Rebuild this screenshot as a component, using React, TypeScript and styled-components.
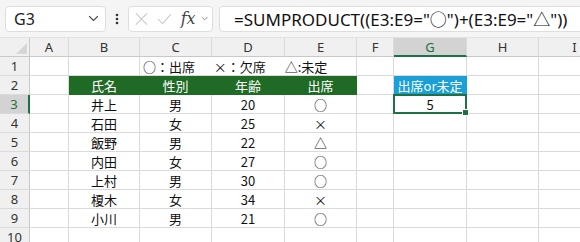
import React from 'react'
import styled, { createGlobalStyle } from 'styled-components'

const GlobalStyle = createGlobalStyle`
  html, body { margin: 0; padding: 0; background: #fff; }
  body { width: 580px; height: 242px; overflow: hidden; }
`

const COLS = ['A', 'B', 'C', 'D', 'E', 'F', 'G', 'H', 'I']
const WIDTHS = '30px 39px 71px 72px 73px 72px 37px 73px 72px 72px'

const rows = [
  { name: '井上', sex: '男', age: 20, mark: '○' },
  { name: '石田', sex: '女', age: 25, mark: '×' },
  { name: '飯野', sex: '男', age: 22, mark: '△' },
  { name: '内田', sex: '女', age: 27, mark: '○' },
  { name: '上村', sex: '男', age: 30, mark: '○' },
  { name: '榎木', sex: '女', age: 34, mark: '×' },
  { name: '小川', sex: '男', age: 21, mark: '○' },
]

const Chevron = ({ size = 10, color = '#555' }: { size?: number; color?: string }) => (
  <svg width={size} height={size * 0.6} viewBox="0 0 10 6">
    <path d="M1 1 L5 5 L9 1" fill="none" stroke={color} strokeWidth="1.1" />
  </svg>
)

export default function App() {
  return (
    <>
      <GlobalStyle />
      <Window>
        <Toolbar>
          <NameBox>
            <span>G3</span>
            <Chevron size={11} color="#444" />
          </NameBox>
          <Dots>
            <svg width="4" height="12" viewBox="0 0 4 12">
              <circle cx="2" cy="2" r="1.3" fill="#333" />
              <circle cx="2" cy="6" r="1.3" fill="#333" />
              <circle cx="2" cy="10" r="1.3" fill="#333" />
            </svg>
          </Dots>
          <FxBox>
            <svg width="14" height="14" viewBox="0 0 14 14">
              <path d="M1 1 L13 13 M13 1 L1 13" stroke="#c6c6c6" strokeWidth="1.1" fill="none" />
            </svg>
            <svg width="16" height="12" viewBox="0 0 16 12">
              <path d="M1 6 L6 11 L15 1" stroke="#c6c6c6" strokeWidth="1.1" fill="none" />
            </svg>
            <FxLabel>fx</FxLabel>
            <Chevron size={8} color="#777" />
          </FxBox>
          <FormulaBox>=SUMPRODUCT((E3:E9="○")+(E3:E9="△"))</FormulaBox>
        </Toolbar>
        <Sheet>
          <Corner>
            <svg width="11" height="11" viewBox="0 0 11 11">
              <path d="M11 0 L11 11 L0 11 Z" fill="#d6d6d6" />
            </svg>
          </Corner>
          {COLS.map((c) => (
            <ColHead key={c} $active={c === 'G'}>{c}</ColHead>
          ))}

          <RowHead>1</RowHead>
          <Cell />
          <Cell />
          <Legend>○：出席　&nbsp;&nbsp;×：欠席　&nbsp;&nbsp;△:未定</Legend>
          <Cell />
          <Cell />
          <Cell />
          <Cell />

          <RowHead>2</RowHead>
          <Cell />
          <HeadCell>氏名</HeadCell>
          <HeadCell>性別</HeadCell>
          <HeadCell>年齢</HeadCell>
          <HeadCell>出席</HeadCell>
          <Cell />
          <BlueCell>出席or未定</BlueCell>
          <Cell />
          <Cell />

          {rows.map((r, i) => (
            <React.Fragment key={r.name}>
              <RowHead $active={i === 0}>{i + 3}</RowHead>
              <Cell />
              <Cell>{r.name}</Cell>
              <Cell>{r.sex}</Cell>
              <Cell>{r.age}</Cell>
              <Cell>{r.mark}</Cell>
              <Cell />
              {i === 0 ? (
                <Selected>
                  5
                  <Handle />
                </Selected>
              ) : (
                <Cell />
              )}
              <Cell />
              <Cell />
            </React.Fragment>
          ))}

          <RowHead>10</RowHead>
          {COLS.map((c) => (
            <Cell key={c} />
          ))}
        </Sheet>
      </Window>
    </>
  )
}

const Window = styled.div`
  width: 580px;
  height: 242px;
  overflow: hidden;
  background: #fff;
  font-family: 'Noto Sans', 'Noto Sans CJK JP', sans-serif;
`

const Toolbar = styled.div`
  display: flex;
  align-items: center;
  height: 38px;
  padding: 0 0 0 5px;
  box-sizing: border-box;
  background: #f5f5f5;
  border-bottom: 1px solid #e3e3e3;
`

const Box = styled.div`
  height: 26px;
  box-sizing: border-box;
  background: #fff;
  border: 1px solid #dedede;
  border-radius: 4px;
  display: flex;
  align-items: center;
`

const NameBox = styled(Box)`
  width: 101px;
  padding: 0 6px 0 8px;
  justify-content: space-between;
  font-size: 16px;
  color: #222;
`

const Dots = styled.div`
  width: 22px;
  display: flex;
  justify-content: center;
`

const FxBox = styled(Box)`
  width: 85px;
  padding: 0 4px 0 6px;
  gap: 5px;
  svg:nth-child(2) { margin-left: 4px; }
`

const FxLabel = styled.span`
  font-family: 'DejaVu Serif', 'Liberation Serif', serif;
  font-style: italic;
  font-size: 16px;
  color: #444;
  margin-left: 4px;
`

const FormulaBox = styled(Box)`
  flex: 1;
  margin-left: 6px;
  margin-right: -6px;
  padding-left: 14px;
  font-size: 17px;
  color: #111;
  white-space: nowrap;
  overflow: hidden;
`

const Sheet = styled.div`
  display: grid;
  grid-template-columns: ${WIDTHS};
  grid-template-rows: 19px;
  grid-auto-rows: 19px;
  font-family: 'Noto Sans CJK JP', 'Noto Sans', sans-serif;
  font-size: 13px;
`

const Corner = styled.div`
  background: #f0f0f0;
  border-right: 1px solid #c8c8c8;
  border-bottom: 1px solid #c8c8c8;
  display: flex;
  align-items: flex-end;
  justify-content: flex-end;
  padding: 0 2px 2px 0;
`

const ColHead = styled.div<{ $active?: boolean }>`
  box-sizing: border-box;
  background: ${(p) => (p.$active ? '#d3d3d3' : '#f0f0f0')};
  border-right: 1px solid #dadada;
  border-bottom: ${(p) => (p.$active ? '2px solid #1e7145' : '1px solid #c8c8c8')};
  display: flex;
  align-items: center;
  justify-content: center;
  font-family: 'Noto Sans', sans-serif;
  font-size: 13px;
  color: ${(p) => (p.$active ? '#1e7145' : '#333')};
`

const RowHead = styled.div<{ $active?: boolean }>`
  box-sizing: border-box;
  background: ${(p) => (p.$active ? '#d3d3d3' : '#f0f0f0')};
  border-right: ${(p) => (p.$active ? '2px solid #1e7145' : '1px solid #c8c8c8')};
  border-bottom: 1px solid #dadada;
  display: flex;
  align-items: center;
  justify-content: center;
  font-family: 'Noto Sans', sans-serif;
  font-size: 13px;
  color: ${(p) => (p.$active ? '#1e7145' : '#333')};
`

const Cell = styled.div`
  box-sizing: border-box;
  border-right: 1px solid #dadada;
  border-bottom: 1px solid #dadada;
  display: flex;
  align-items: center;
  justify-content: center;
  color: #111;
  white-space: nowrap;
`

const Legend = styled(Cell)`
  grid-column: span 3;
  justify-content: flex-start;
  padding-left: 3px;
`

const HeadCell = styled(Cell)`
  background: #1f6b25;
  border-color: #1f6b25;
  color: #fff;
`

const BlueCell = styled(Cell)`
  background: #1a9fd6;
  border-right-color: #1a9fd6;
  color: #fff;
`

const Selected = styled(Cell)`
  position: relative;
  border: 2px solid #1e7145;
  margin: -1px 0 0 -1px;
`

const Handle = styled.span`
  position: absolute;
  right: -4px;
  bottom: -4px;
  width: 5px;
  height: 5px;
  background: #1e7145;
  border: 1px solid #fff;
`
